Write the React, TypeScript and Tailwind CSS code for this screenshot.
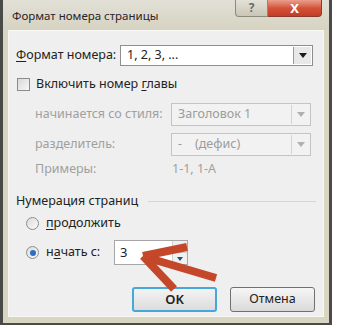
import React from "react";

const font = { fontFamily: '"Noto Sans", "Open Sans", sans-serif' };

function DropButton({ disabled }: { disabled?: boolean }) {
  return (
    <div
      className={
        "flex h-full w-[18px] items-center justify-center border-l " +
        (disabled ? "border-[#d4d4d4]" : "border-[#9a9a9a] bg-[#e8e8e8]")
      }
    >
      <svg width="8" height="5" viewBox="0 0 8 5">
        <path d="M0 0 L8 0 L4 5 Z" fill={disabled ? "#b0b0b0" : "#1a1a1a"} />
      </svg>
    </div>
  );
}

function Select({ value, disabled }: { value: string; disabled?: boolean }) {
  return (
    <div
      className={
        "flex h-full items-center justify-between border pl-[6px] pr-[1px] py-[1px] " +
        (disabled
          ? "border-[#c4c4c4] bg-[#f2f2f2] text-[#9c9c9c]"
          : "border-[#8e8e8e] bg-white text-[#222]")
      }
    >
      <span className="whitespace-pre">{value}</span>
      <DropButton disabled={disabled} />
    </div>
  );
}

function Radio({ checked }: { checked?: boolean }) {
  return (
    <div className="flex h-[13px] w-[13px] items-center justify-center rounded-full border border-[#8c8c8c] bg-gradient-to-br from-[#dcdcdc] to-[#fafafa]">
      {checked && <div className="h-[6px] w-[6px] rounded-full bg-[#2a6fc0]" />}
    </div>
  );
}

export default function App() {
  return (
    <div className="h-[328px] w-[337px] bg-white text-[12.5px] leading-none" style={font}>
      <div className="relative flex h-[325px] w-[332px] flex-col border-x-[3px] border-b-[2px] border-x-[#4a4a48] border-b-[#4a4a48] bg-[#d8d5c2]">
        {/* title bar */}
        <div className="flex h-[30px] items-center bg-gradient-to-b from-[#e2e0d6] to-[#d6d3c2] pl-[9px] text-[11.5px] text-[#2a2228]">
          <span className="mt-[1px]">Формат номера страницы</span>
        </div>
        <div className="absolute right-[7px] top-0 flex h-[17px]">
          <div className="flex w-[33px] items-center justify-center rounded-bl-[4px] border border-t-0 border-[#8d8a7c] bg-gradient-to-b from-[#e4e2d8] to-[#c9c6b6] text-[12px] font-bold text-[#6a6a6a]">
            ?
          </div>
          <div className="flex w-[54px] items-center justify-center rounded-br-[4px] border border-l-0 border-t-0 border-[#8a3a2c] bg-gradient-to-b from-[#e8a08c] via-[#d5523a] to-[#c43d26] text-[13px] font-bold text-white">
            X
          </div>
        </div>

        {/* content panel */}
        <div className="mx-[5px] mb-[6px] flex flex-1 flex-col border border-[#f8f8f4] bg-[#efefef] px-[7px] pt-[14px] text-[#222]">
          <div className="flex h-[21px] items-center">
            <span className="w-[104px]">
              <span className="underline underline-offset-2">Ф</span>ормат номера:
            </span>
            <div className="h-full w-[193px]">
              <Select value="1, 2, 3, ..." />
            </div>
          </div>

          <div className="mt-[11px] flex h-[14px] items-center">
            <div className="ml-[1px] h-[13px] w-[13px] border border-[#8c8c8c] bg-gradient-to-br from-[#d8d8d8] to-[#f8f8f8]" />
            <span className="ml-[6px]">
              Включить номер <span className="underline underline-offset-2">г</span>лавы
            </span>
          </div>

          <div className="mt-[12px] flex h-[23px] items-center text-[#a0a0a0]">
            <span className="w-[155px] pl-[19px]">начинается со стиля:</span>
            <div className="h-full w-[140px]">
              <Select value="Заголовок 1" disabled />
            </div>
          </div>

          <div className="mt-[7px] flex h-[23px] items-center text-[#a0a0a0]">
            <span className="w-[155px] pl-[19px]">разделитель:</span>
            <div className="h-full w-[140px]">
              <Select value={"-    (дефис)"} disabled />
            </div>
          </div>

          <div className="mt-[6px] flex h-[14px] items-center text-[#a0a0a0]">
            <span className="w-[156px] pl-[19px]">Примеры:</span>
            <span>1-1, 1-A</span>
          </div>

          <div className="mt-[18px] flex h-[14px] items-center">
            <span>Нумерация страниц</span>
            <div className="ml-[10px] h-px flex-1 bg-[#d6d6d6]" />
          </div>

          <div className="mt-[8px] flex h-[14px] items-center pl-[10px]">
            <Radio />
            <span className="ml-[7px]">
              <span className="underline underline-offset-2">п</span>родолжить
            </span>
          </div>

          <div className="mt-[10px] flex h-[25px] items-center pl-[10px]">
            <Radio checked />
            <span className="ml-[7px] w-[68px]">
              н<span className="underline underline-offset-2">а</span>чать с:
            </span>
            <div className="flex h-full w-[74px] items-center justify-between border border-[#a6a6a6] bg-white pl-[5px]">
              <span className="text-[13px]">3</span>
              <div className="flex h-full w-[15px] flex-col border-l border-[#d0d0d0]">
                <div className="flex flex-1 items-center justify-center border-b border-[#d0d0d0] bg-[#f0f0f0]">
                  <svg width="6" height="4" viewBox="0 0 6 4">
                    <path d="M0 4 L6 4 L3 0 Z" fill="#2c4c7c" />
                  </svg>
                </div>
                <div className="flex flex-1 items-center justify-center bg-[#f0f0f0]">
                  <svg width="6" height="4" viewBox="0 0 6 4">
                    <path d="M0 0 L6 0 L3 4 Z" fill="#2c4c7c" />
                  </svg>
                </div>
              </div>
            </div>
          </div>

          <div className="mt-[22px] flex justify-end gap-[13px] pr-[1px]">
            <button className="flex h-[25px] w-[85px] items-center justify-center rounded-[3px] border-2 border-[#45a8d8] bg-gradient-to-b from-[#f4f4f4] to-[#dcdcdc] text-[13px] font-semibold text-[#222]">
              OK
            </button>
            <button className="flex h-[25px] w-[85px] items-center justify-center rounded-[3px] border border-[#707070] bg-gradient-to-b from-[#f6f6f6] to-[#dadada] text-[12.5px] text-[#222]">
              Отмена
            </button>
          </div>
        </div>

        {/* red arrow overlay */}
        <svg
          className="pointer-events-none absolute left-0 top-0"
          width="332"
          height="325"
          viewBox="0 0 332 325"
        >
          <g stroke="#c4472a" strokeWidth="8" strokeLinecap="butt" fill="none">
            <line x1="142" y1="257" x2="213" y2="278" />
            <line x1="140" y1="256" x2="184" y2="247" />
            <line x1="140" y1="256" x2="171" y2="289" />
          </g>
        </svg>
      </div>
    </div>
  );
}
